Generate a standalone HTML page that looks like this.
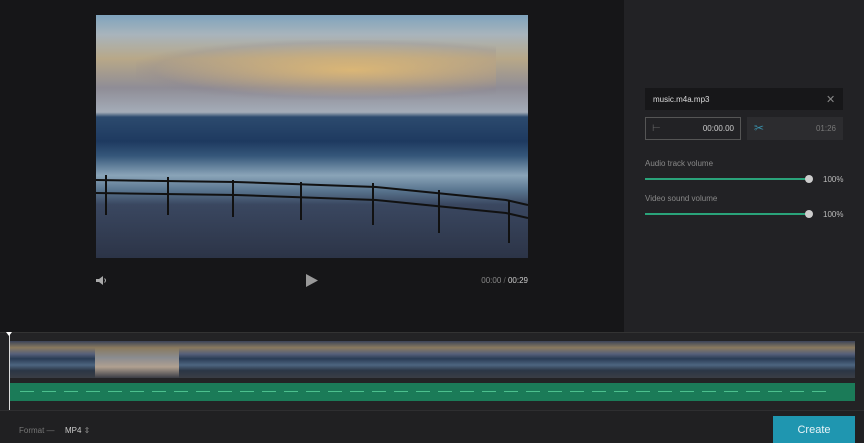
<!DOCTYPE html>
<html><head><style>
*{margin:0;padding:0;box-sizing:border-box}
body{width:864px;height:443px;overflow:hidden;background:#161618;font-family:"Liberation Sans",sans-serif;position:relative}
.a{position:absolute}
.t{color:#bbb;font-size:8px}
.frame{position:absolute;top:341px;height:37px;width:84.5px;background:linear-gradient(#3b4358 0%,#8a7a5e 18%,#56607a 35%,#2a3c55 48%,#4d6580 65%,#2b3645 80%,#3a3d45 100%)}
</style></head><body>
<div class="a" style="left:624px;top:0;width:240px;height:332px;background:#222225"></div>
<!-- video -->
<div class="a" style="left:96px;top:15px;width:432px;height:243px;overflow:hidden;background:linear-gradient(#7fa3bd 0%,#a8b4bc 8%,#b8a888 18%,#8f8d96 30%,#a4acb8 40%,#2c4a6e 42%,#1e3a60 52%,#35577a 58%,#8aa4b8 66%,#5a7690 72%,#3a4760 78%,#2c3447 100%)">
<div class="a" style="left:40px;top:25px;width:360px;height:60px;background:radial-gradient(ellipse at 60% 50%,rgba(235,190,110,.75),rgba(140,130,140,.2) 65%,transparent 75%)"></div>
<svg class="a" style="left:0;top:0" width="432" height="243"><g stroke="#111" stroke-width="2" fill="none"><path d="M0 165 L140 167 L280 172 L410 185 L432 190"/><path d="M0 178 L140 180 L280 185 L410 198 L432 203"/><path d="M10 160V200M72 162V200M137 165V202M205 167V205M277 168V210M343 175V218M413 185V228"/></g></svg>
</div>
<!-- controls -->
<svg class="a" style="left:95px;top:275px" width="12" height="11"><path d="M1 4h3l4-3v9l-4-3H1z" fill="#aaa"/><path d="M9.5 3.5q2 2 0 4" stroke="#aaa" fill="none"/></svg>
<svg class="a" style="left:305px;top:273px" width="14" height="15"><path d="M1 1L13 7.5L1 14z" fill="#999"/></svg>
<div class="a t" style="left:470px;top:276px;width:58px;text-align:right;color:#888">00:00 <span style="color:#666">/</span> <span style="color:#ccc">00:29</span></div>
<!-- right panel -->
<div class="a" style="left:645px;top:88px;width:198px;height:22px;background:#171719"></div>
<div class="a t" style="left:653px;top:95px;color:#ddd">music.m4a.mp3</div>
<div class="a" style="left:826px;top:93px;color:#888;font-size:11px">✕</div>
<div class="a" style="left:645px;top:117px;width:96px;height:23px;border:1px solid #555"></div>
<div class="a" style="left:652px;top:123px;color:#666;font-size:10px">⊢</div>
<div class="a t" style="left:690px;top:124px;width:44px;text-align:right;color:#ccc">00:00.00</div>
<div class="a" style="left:747px;top:117px;width:96px;height:23px;background:#2c2c2f"></div>
<div class="a" style="left:754px;top:121px;color:#3a8ea8;font-size:12px">✂</div>
<div class="a t" style="left:800px;top:124px;width:36px;text-align:right;color:#777">01:26</div>
<div class="a t" style="left:645px;top:159px;color:#888">Audio track volume</div>
<div class="a" style="left:645px;top:178px;width:164px;height:2px;background:#2aa37a"></div>
<div class="a" style="left:805px;top:175px;width:8px;height:8px;border-radius:50%;background:#ccc"></div>
<div class="a t" style="left:823px;top:175px">100%</div>
<div class="a t" style="left:645px;top:194px;color:#888">Video sound volume</div>
<div class="a" style="left:645px;top:213px;width:164px;height:2px;background:#2aa37a"></div>
<div class="a" style="left:805px;top:210px;width:8px;height:8px;border-radius:50%;background:#ccc"></div>
<div class="a t" style="left:823px;top:210px">100%</div>
<!-- timeline -->
<div class="a" style="left:0;top:332px;width:864px;height:78px;background:#232325;border-top:1px solid #333"></div>
<div class="frame" style="left:10px"></div><div class="frame" style="left:94.5px;background:linear-gradient(#3b4358,#8a7a5e 18%,#8a8c90 45%,#b0a090 70%,#3a3d45)"></div><div class="frame" style="left:179px"></div><div class="frame" style="left:263.5px"></div><div class="frame" style="left:348px"></div><div class="frame" style="left:432.5px"></div><div class="frame" style="left:517px"></div><div class="frame" style="left:601.5px"></div><div class="frame" style="left:686px"></div><div class="frame" style="left:770.5px"></div>
<div class="a" style="left:10px;top:383px;width:845px;height:18px;background:#1b7b58"></div>
<div class="a" style="left:20px;top:391px;width:810px;height:1px;background:repeating-linear-gradient(90deg,#4cc08e 0 14px,transparent 14px 22px)"></div>
<div class="a" style="left:9px;top:334px;width:1px;height:76px;background:#ddd"></div>
<div class="a" style="left:6px;top:332px;width:0;height:0;border:3px solid transparent;border-top:4px solid #fff"></div>
<!-- bottom -->
<div class="a" style="left:0;top:410px;width:864px;height:33px;background:#202022;border-top:1px solid #2e2e30"></div>
<div class="a t" style="left:19px;top:426px;color:#777">Format —</div>
<div class="a t" style="left:65px;top:426px;color:#ccc">MP4 <span style="color:#888">⇕</span></div>
<div class="a" style="left:773px;top:416px;width:82px;height:27px;background:#1f96b0;color:#e8f4f8;font-size:11px;text-align:center;padding-top:8px">Create</div>
</body></html>
